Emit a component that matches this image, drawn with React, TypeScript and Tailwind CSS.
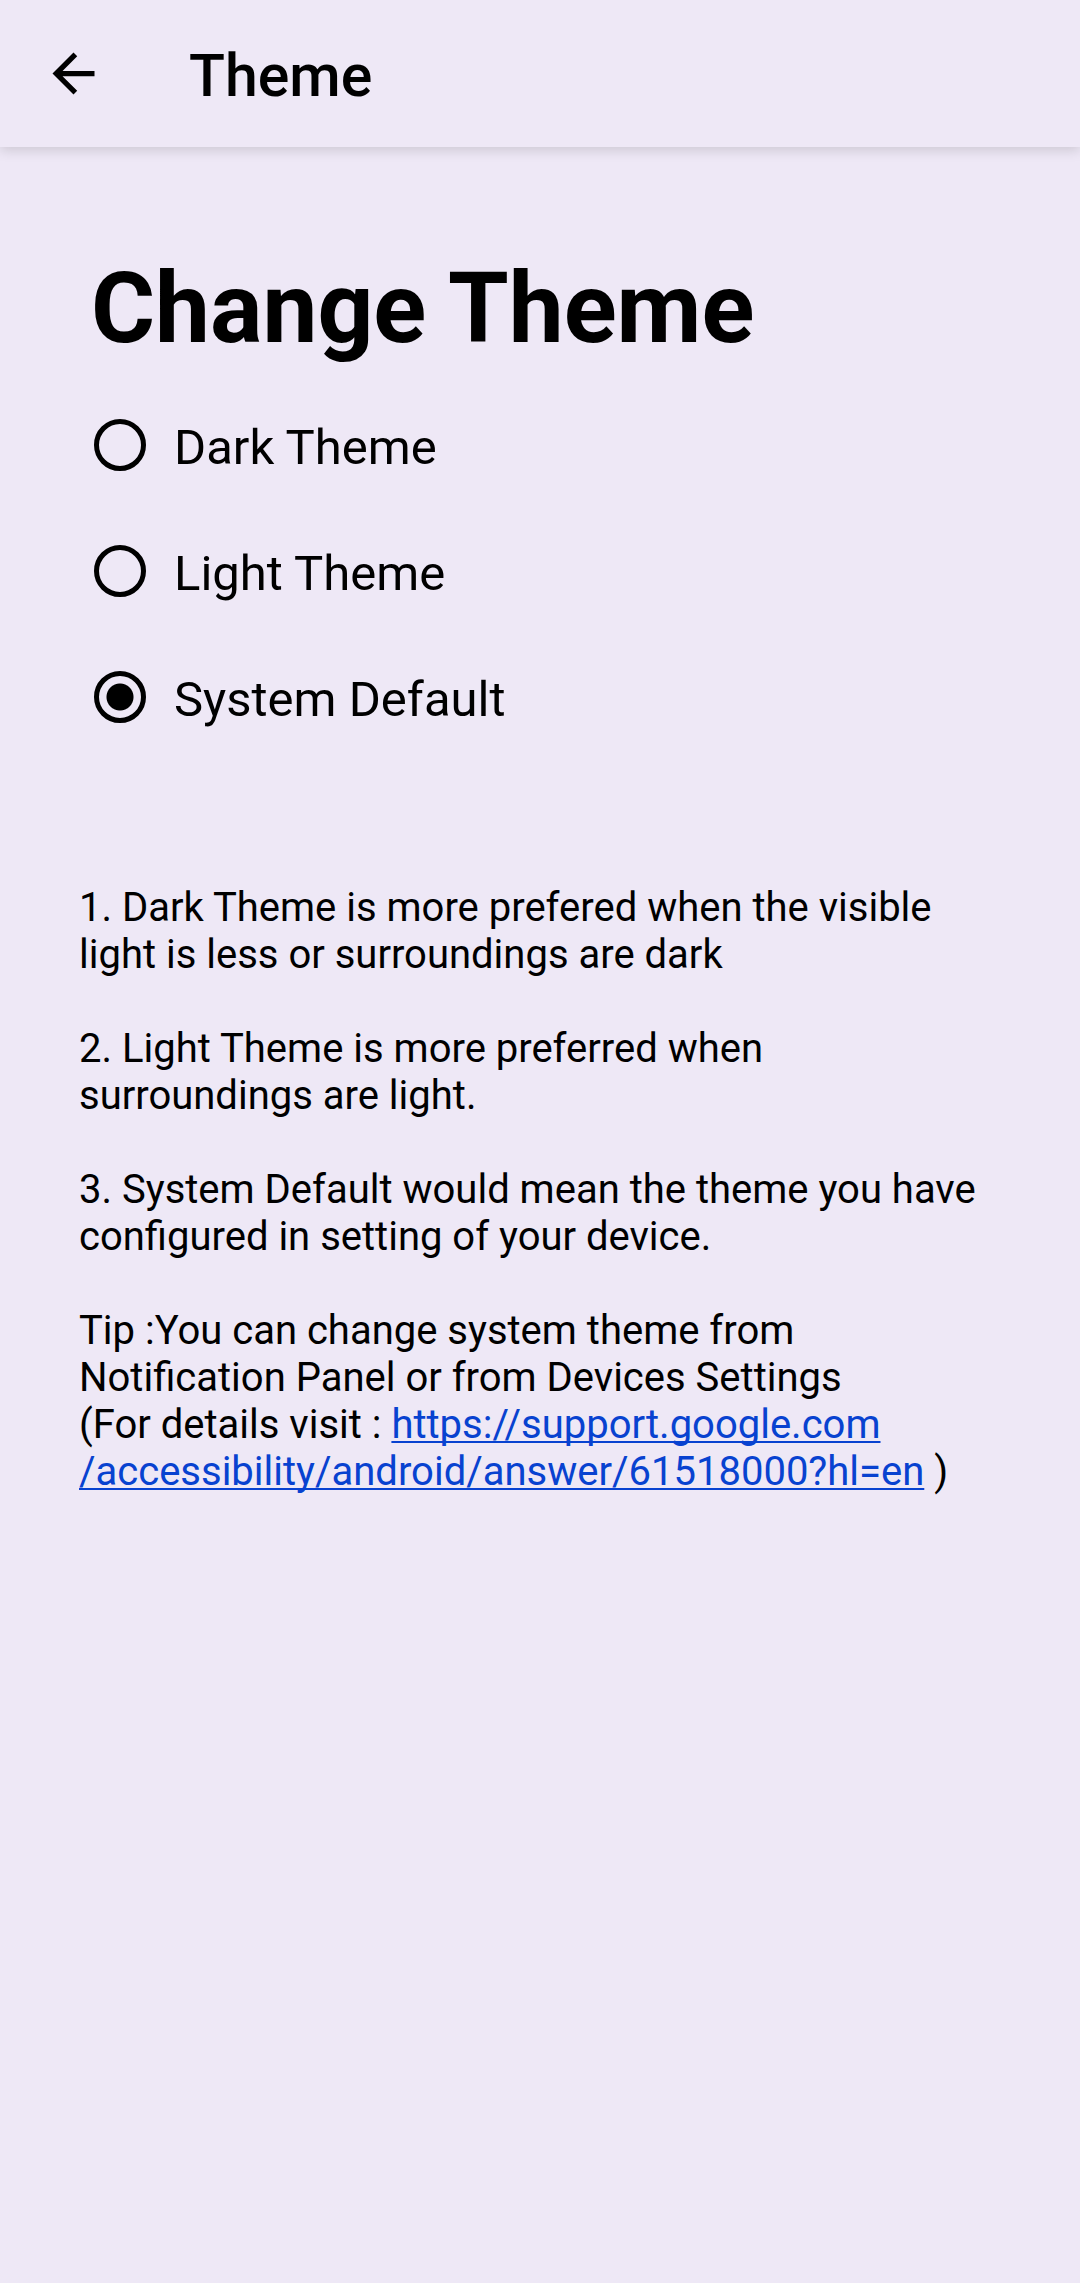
import { useState } from "react";

const options = ["Dark Theme", "Light Theme", "System Default"];

export default function App() {
  const [selected, setSelected] = useState("System Default");
  return (
    <div className="min-h-screen bg-[#eee8f6] font-[Roboto,sans-serif] text-black">
      <header className="flex h-[147px] items-center pl-[42px] shadow-[0_3px_12px_rgba(0,0,0,0.15)]">
        <button type="button" aria-label="Back" className="size-[63px]">
          <svg viewBox="0 0 24 24" className="size-full" fill="currentColor">
            <path d="M20 11H7.83l5.59-5.59L12 4l-8 8 8 8 1.41-1.41L7.83 13H20v-2z" />
          </svg>
        </button>
        <h1 className="pl-[84px] pt-[6px] text-[59px] font-medium">Theme</h1>
      </header>
      <main className="px-[79px] pt-[102px]">
        <h2 id="theme-heading" className="pl-3 text-[98px] leading-[120px] font-bold">Change Theme</h2>
        <div role="radiogroup" aria-labelledby="theme-heading" className="pl-[15px] pt-[13px]">
          {options.map((o) => (
            <label key={o} className="flex h-[126px] items-center gap-7 text-[49px]">
              <input
                type="radio"
                name="theme"
                checked={selected === o}
                onChange={() => setSelected(o)}
                className="size-[52px] appearance-none rounded-full border-[5px] border-black checked:bg-[radial-gradient(circle,black_13px,transparent_14px)]"
              />
              <span className="pt-[6px]">{o}</span>
            </label>
          ))}
        </div>
        <div className="space-y-[47px] pt-[124px] text-[40px] leading-[47px]">
          <p>1. Dark Theme is more prefered when the visible<br />light is less or surroundings are dark</p>
          <p>2. Light Theme is more preferred when<br />surroundings are light.</p>
          <p>3. System Default would mean the theme you have<br />configured in setting of your device.</p>
          <p>
            Tip :You can change system theme from<br />Notification Panel or from Devices Settings<br />
            (For details visit :{" "}
            <a
              href="https://support.google.com/accessibility/android/answer/61518000?hl=en"
              className="text-[#0842d0] underline decoration-2 underline-offset-3 [text-decoration-skip-ink:none]"
            >
              https://support.google.com<br />/accessibility/android/answer/61518000?hl=en
            </a>{" "}
            )
          </p>
        </div>
      </main>
    </div>
  );
}
